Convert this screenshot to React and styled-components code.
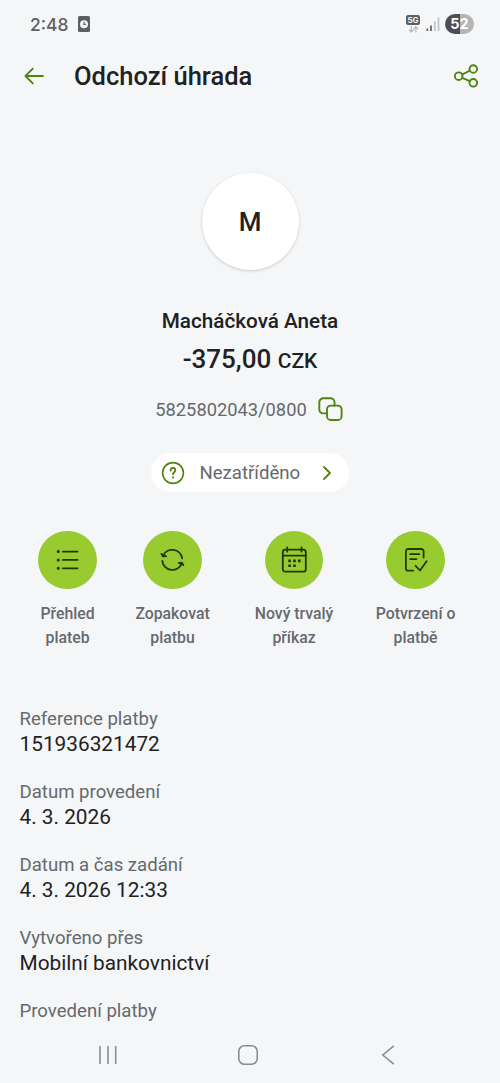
import React from 'react';
import styled, { createGlobalStyle } from 'styled-components';

const details = [
  { label: 'Reference platby', value: '151936321472' },
  { label: 'Datum provedení', value: '4. 3. 2026' },
  { label: 'Datum a čas zadání', value: '4. 3. 2026 12:33' },
  { label: 'Vytvořeno přes', value: 'Mobilní bankovnictví' },
  { label: 'Provedení platby' },
];

const ListIcon = () => (
  <Icon $size={29} $width={1.8} viewBox="0 0 29 29">
    <path d="M9.8 6.6h14.8M9.8 14.9h14.8M9.8 23.3h14.8" />
    <path strokeWidth="3" d="M5.2 6.6h.1M5.2 14.9h.1M5.2 23.3h.1" />
  </Icon>
);

const RepeatIcon = () => (
  <Icon $size={29} $width={1.8} viewBox="0 0 29 29">
    <path d="M5 10.8A10.1 10.1 0 0 1 24.2 13.4" />
    <path fill="#203a05" strokeWidth="1.3" d="M3.2 8.6l1.5 3.1 3.8-.4z" />
    <path d="M23.8 18.4A10.1 10.1 0 0 1 4.3 15.8" />
    <path fill="#203a05" strokeWidth="1.3" d="M25.6 20.4l-1.6-3-3.7.6z" />
  </Icon>
);

const CalendarIcon = () => (
  <Icon $size={29} $width={1.8} viewBox="0 0 29 29">
    <rect x="2.8" y="4.7" width="23" height="22" rx="2.5" />
    <path d="M2.8 10.6H26M7.2 2.5v4.2M21.5 2.5v4.2" />
    <path
      strokeWidth="2.6"
      strokeLinecap="square"
      d="M9.6 15.9h.1M14.4 15.9h.1M19.2 15.9h.1M9.6 20.8h.1M14.4 20.8h.1"
    />
  </Icon>
);

const ConfirmIcon = () => (
  <Icon $size={29} $width={1.8} viewBox="0 0 29 29">
    <path d="M12.2 25.6H7.1a2.2 2.2 0 0 1-2.2-2.2V6.2A2.2 2.2 0 0 1 7.1 4h13.3a2.2 2.2 0 0 1 2.2 2.2v6.4" />
    <path d="M9.2 9.2h9.2M9.2 14.1h6.3" />
    <path d="M14.6 20.8l4.4 4.7 6.6-9.3" />
  </Icon>
);

const actions = [
  { label: 'Přehled\nplateb', icon: <ListIcon /> },
  { label: 'Zopakovat\nplatbu', icon: <RepeatIcon /> },
  { label: 'Nový trvalý\npříkaz', icon: <CalendarIcon /> },
  { label: 'Potvrzení o\nplatbě', icon: <ConfirmIcon /> },
];

function StatusBar() {
  return (
    <StatusStyled>
      <span className="time">2:48</span>
      <svg className="alarm" width="12" height="16" viewBox="0 0 12 16">
        <rect width="12" height="16" rx="1.5" fill="#5d5f61" />
        <circle cx="6" cy="8.2" r="4" fill="#f4f6f8" />
        <path d="M6 5.8v2.6h1.9" fill="none" stroke="#5d5f61" strokeWidth="1.1" />
      </svg>
      <Network>
        <span>5G</span>
        <svg width="11" height="7" viewBox="0 0 11 7" fill="none" stroke="#b0b2b4" strokeWidth="1.1">
          <path d="M3.3 0v5.8M1 3.6l2.3 2.3 2.3-2.3M7.9 6.6V1M5.6 3.2L7.9.9l2.3 2.3" />
        </svg>
      </Network>
      <svg className="signal" width="14" height="14" viewBox="0 0 14 14">
        <path d="M1.3 14v-2.6M5 14V8.4" stroke="#5d5f61" strokeWidth="1.7" />
        <path d="M8.8 14V4.3M12.5 14V.6" stroke="#c0c2c4" strokeWidth="1.7" />
      </svg>
      <Battery>52</Battery>
    </StatusStyled>
  );
}

function App() {
  return (
    <Screen>
      <GlobalStyle />
      <StatusBar />
      <Header>
        <Icon $size={24} $width={1.8} $color="#4f8410" viewBox="0 0 24 24">
          <path d="M21 12H3.4M10.8 4.6L3.4 12l7.4 7.4" />
        </Icon>
        <h1>Odchozí úhrada</h1>
        <Icon $size={28} $width={1.9} $color="#4f8410" viewBox="0 0 28 28">
          <circle cx="6.7" cy="14.2" r="3.8" />
          <circle cx="21.3" cy="7" r="3.8" />
          <circle cx="21.3" cy="20.8" r="3.8" />
          <path d="M10.2 12.5l7.6-3.8M10.2 15.9l7.6 3.3" />
        </Icon>
      </Header>

      <Recipient>
        <Avatar>M</Avatar>
        <h2>Macháčková Aneta</h2>
        <Amount>
          -375,00 <small>CZK</small>
        </Amount>
        <Account>
          <span>5825802043/0800</span>
          <Icon $size={26} $width={1.9} $color="#4f8410" viewBox="0 0 26 26">
            <path d="M8.6 17.4H5.3a4 4 0 0 1-4-4V6.3a4 4 0 0 1 4-4h7.2a4 4 0 0 1 4 4v3.2" />
            <rect x="9" y="9.6" width="14.6" height="14.4" rx="3.8" />
          </Icon>
        </Account>
        <Category>
          <Icon $size={24} $width={1.6} $color="#4f8410" viewBox="0 0 24 24">
            <circle cx="12" cy="12" r="10.4" />
            <path strokeWidth="1.8" d="M9.7 9.7V9.3a2.3 2.3 0 0 1 4.6 0c0 1.9-2.3 2-2.3 4" />
            <path strokeWidth="2.1" d="M12 16.4v.1" />
          </Icon>
          <span>Nezatříděno</span>
          <Icon $size={16} $width={1.8} $color="#4f8410" viewBox="0 0 16 16">
            <path d="M5 2l6 6-6 6" />
          </Icon>
        </Category>
      </Recipient>

      <Actions>
        {actions.map((item) => (
          <li key={item.label}>
            <ActionButton>{item.icon}</ActionButton>
            <span>{item.label}</span>
          </li>
        ))}
      </Actions>

      <Details>
        {details.map((item) => (
          <div key={item.label}>
            <dt>{item.label}</dt>
            {item.value && <dd>{item.value}</dd>}
          </div>
        ))}
      </Details>

      <BottomNav>
        <Icon $size={24} $width={1.6} $color="#8b8d8f" viewBox="0 0 24 24">
          <path strokeLinecap="butt" d="M4 3v18M12 3v18M19.7 3v18" />
        </Icon>
        <Icon $size={24} $width={1.6} $color="#8b8d8f" viewBox="0 0 24 24">
          <rect x="2.8" y="2.8" width="18.4" height="18.4" rx="5.6" />
        </Icon>
        <Icon $size={24} $width={1.6} $color="#8b8d8f" viewBox="0 0 24 24">
          <path strokeLinecap="butt" strokeLinejoin="miter" d="M17.8 2.8L6.8 12l11 9.2" />
        </Icon>
      </BottomNav>
    </Screen>
  );
}

const GlobalStyle = createGlobalStyle`
  * {
    box-sizing: border-box;
    margin: 0;
    padding: 0;
  }
  body {
    background: #f4f6f8;
    font-family: Roboto, 'Noto Sans', sans-serif;
    color: #1f2123;
  }
`;

const Icon = styled.svg`
  display: block;
  flex: none;
  width: ${(p) => p.$size}px;
  height: ${(p) => p.$size}px;
  fill: none;
  stroke: ${(p) => p.$color || '#203a05'};
  stroke-width: ${(p) => p.$width}px;
  stroke-linecap: round;
  stroke-linejoin: round;
`;

const Screen = styled.div`
  display: flex;
  flex-direction: column;
  width: 500px;
  height: 1083px;
  overflow: hidden;
`;

const StatusStyled = styled.div`
  display: flex;
  align-items: center;
  height: 48px;
  padding: 0 26px 0 30px;

  .time {
    width: 48px;
    font-family: Inter, sans-serif;
    font-size: 17.4px;
    font-weight: 500;
    color: #5d5f61;
  }
  .signal {
    margin: 0 5px 0 6px;
  }
`;

const Network = styled.div`
  display: flex;
  flex-direction: column;
  align-items: center;
  gap: 1px;
  margin-left: auto;

  span {
    width: 14px;
    height: 10px;
    border-radius: 2px;
    background: #5d5f61;
    color: #f4f6f8;
    font: 700 8px/10px Inter, sans-serif;
    text-align: center;
  }
`;

const Battery = styled.div`
  width: 29px;
  height: 20px;
  border-radius: 10px;
  background: linear-gradient(90deg, #4c4e50 52%, #b3b5b7 52%);
  color: #fff;
  font: 700 14.5px/20px Inter, sans-serif;
  text-align: center;
`;

const Header = styled.header`
  display: flex;
  align-items: center;
  height: 56px;
  padding: 0 20px 0 22px;

  h1 {
    flex: 1;
    margin-left: 28px;
    font-size: 25.5px;
    font-weight: 500;
    line-height: 32px;
  }
`;

const Recipient = styled.section`
  display: flex;
  flex-direction: column;
  align-items: center;
  padding-top: 69px;

  h2 {
    margin-top: 37px;
    font-size: 20.7px;
    font-weight: 500;
    line-height: 28px;
  }
`;

const Avatar = styled.div`
  width: 97px;
  height: 97px;
  border-radius: 50%;
  background: #fff;
  box-shadow: 0 1px 3px rgba(0, 0, 0, 0.18);
  font-size: 26px;
  font-weight: 500;
  line-height: 98px;
  text-align: center;
`;

const Amount = styled.p`
  margin-top: 8px;
  font-size: 26px;
  font-weight: 500;
  line-height: 32px;

  small {
    font-size: 21px;
  }
`;

const Account = styled.div`
  display: flex;
  align-items: center;
  gap: 11px;
  height: 26px;
  margin-top: 19px;
  padding-right: 1px;
  font-size: 18.3px;
  color: #66696d;
`;

const Category = styled.button`
  display: flex;
  align-items: center;
  width: 198px;
  height: 39px;
  margin-top: 31px;
  padding: 0 14px 0 10px;
  border: 0;
  border-radius: 20px;
  background: #fff;
  font-family: inherit;
  font-size: 18.6px;
  color: #66696d;

  span {
    flex: 1;
    margin-left: 14.5px;
    text-align: left;
  }
`;

const Actions = styled.ul`
  display: grid;
  grid-template-columns: 88.5px repeat(3, 121.5px);
  margin-top: 38.5px;
  padding-left: 23.3px;
  list-style: none;

  li {
    display: flex;
    flex-direction: column;
    align-items: center;
    gap: 13px;
  }
  span {
    font-size: 15.8px;
    font-weight: 500;
    line-height: 24px;
    text-align: center;
    white-space: pre;
    color: #66696d;
  }
`;

const ActionButton = styled.button`
  display: flex;
  align-items: center;
  justify-content: center;
  width: 58.5px;
  height: 58.5px;
  border: 0;
  border-radius: 50%;
  background: #98cb30;
`;

const Details = styled.dl`
  display: flex;
  flex-direction: column;
  gap: 22.1px;
  flex: 1;
  margin-top: 55px;
  padding: 0 19.5px;

  dt {
    font-size: 18.6px;
    line-height: 28px;
    color: #66696d;
  }
  dd {
    margin-top: -1px;
    font-size: 20.8px;
    line-height: 24px;
  }
`;

const BottomNav = styled.nav`
  display: flex;
  justify-content: space-between;
  align-items: center;
  height: 56px;
  padding: 0 100px 0 96px;
`;

export default App;
